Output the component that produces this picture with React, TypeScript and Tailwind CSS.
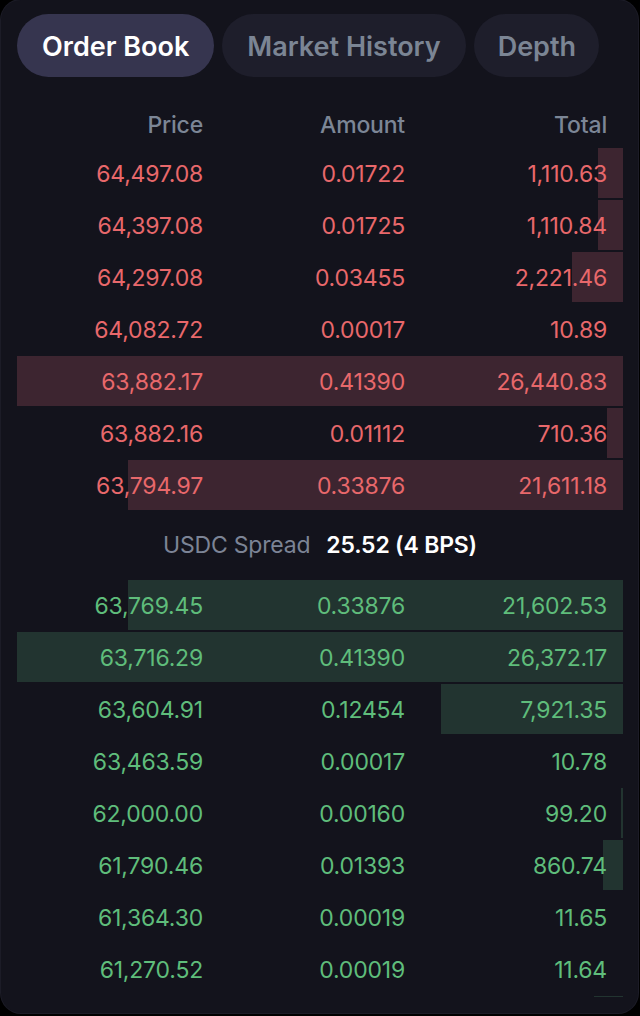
import React from "react";

type Row = { price: string; amount: string; total: string; t: number };

const asks: Row[] = [
  { price: "64,497.08", amount: "0.01722", total: "1,110.63", t: 1110.63 },
  { price: "64,397.08", amount: "0.01725", total: "1,110.84", t: 1110.84 },
  { price: "64,297.08", amount: "0.03455", total: "2,221.46", t: 2221.46 },
  { price: "64,082.72", amount: "0.00017", total: "10.89", t: 0 },
  { price: "63,882.17", amount: "0.41390", total: "26,440.83", t: 26440.83 },
  { price: "63,882.16", amount: "0.01112", total: "710.36", t: 710.36 },
  { price: "63,794.97", amount: "0.33876", total: "21,611.18", t: 21611.18 },
];

const bids: Row[] = [
  { price: "63,769.45", amount: "0.33876", total: "21,602.53", t: 21602.53 },
  { price: "63,716.29", amount: "0.41390", total: "26,372.17", t: 26440.83 },
  { price: "63,604.91", amount: "0.12454", total: "7,921.35", t: 7921.35 },
  { price: "63,463.59", amount: "0.00017", total: "10.78", t: 0 },
  { price: "62,000.00", amount: "0.00160", total: "99.20", t: 99.2 },
  { price: "61,790.46", amount: "0.01393", total: "860.74", t: 860.74 },
  { price: "61,364.30", amount: "0.00019", total: "11.65", t: 0 },
  { price: "61,270.52", amount: "0.00019", total: "11.64", t: 0 },
];

const MAX = 26440.83;
const FULL = 606;

function Bar({ t, side }: { t: number; side: "ask" | "bid" }) {
  const w = t > 0 ? Math.round((t / MAX) * FULL) : 0;
  const bar = side === "ask" ? "bg-[#3d2530]" : "bg-[#223430]";
  if (!w) return null;
  return <div className={`absolute right-0 top-[1px] bottom-[1px] ${bar}`} style={{ width: w }} />;
}

function OrderRow({ r, side }: { r: Row; side: "ask" | "bid" }) {
  const text = side === "ask" ? "text-[#e8686b]" : "text-[#5fbd7b]";
  return (
    <div className={`relative grid grid-cols-3 h-[52px] items-center text-[23px] tracking-[-0.2px] ${text}`}>
      <Bar t={r.t} side={side} />
      <div className="relative text-right pr-4 pt-[2px]">{r.price}</div>
      <div className="relative text-right pr-4 pt-[2px]">{r.amount}</div>
      <div className="relative text-right pr-4 pt-[2px]">{r.total}</div>
    </div>
  );
}

const tabBase = "h-[63px] px-[25px] pt-[3px] rounded-full text-[27px] font-semibold flex items-center";

export default function App() {
  return (
    <div
      className="w-[640px] h-[1016px] bg-black"
      style={{ fontFamily: "Inter, 'Noto Sans', sans-serif" }}
    >
      <div className="ml-px w-[637px] h-[1013px] rounded-[20px] bg-[#13131c] shadow-[0_0_0_1px_#1c1c27] pl-4 pr-[15px] pt-[14px] flex flex-col overflow-hidden">
        <div className="flex gap-2">
          <div className={`${tabBase} bg-[#36354f] text-white`}>Order Book</div>
          <div className={`${tabBase} bg-[#1e1e2b] text-[#7b8594]`}>Market History</div>
          <div className={`${tabBase} bg-[#1e1e2b] text-[#7b8594] pl-[24px] pr-[23px]`}>Depth</div>
        </div>
        <div className="mt-[26px] grid grid-cols-3 h-[44px] items-center text-[23px] font-medium tracking-[-0.2px] text-[#7c8696]">
          <div className="text-right pr-4">Price</div>
          <div className="text-right pr-4">Amount</div>
          <div className="text-right pr-4">Total</div>
        </div>
        <div className="flex-1 overflow-hidden mb-4">
          {asks.map((r, i) => (
            <OrderRow key={"a" + i} r={r} side="ask" />
          ))}
          <div className="h-[68px] flex items-center justify-center gap-4 text-[23px] tracking-[-0.2px]">
            <span className="text-[#7c8496]">USDC Spread</span>
            <span className="text-white font-semibold">25.52 (4 BPS)</span>
          </div>
          {bids.map((r, i) => (
            <OrderRow key={"b" + i} r={r} side="bid" />
          ))}
          <div className="relative h-[52px]">
            <Bar t={1283.1} side="bid" />
          </div>
        </div>
      </div>
    </div>
  );
}
